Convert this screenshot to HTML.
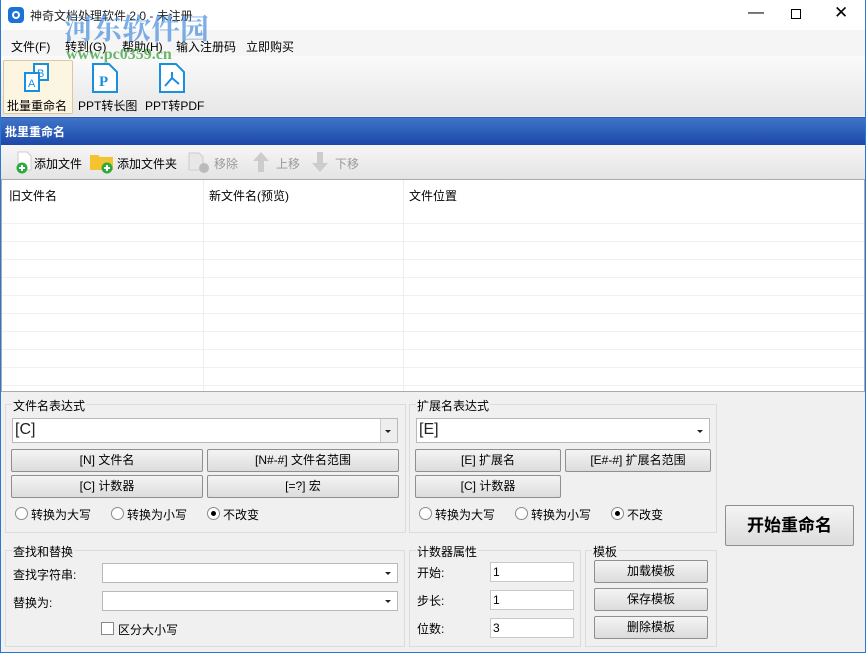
<!DOCTYPE html>
<html><head><meta charset="utf-8"><style>
*{margin:0;padding:0;box-sizing:border-box}
body{width:866px;height:653px;overflow:hidden;background:#f0f0f0;font-family:"Liberation Sans","Noto Sans CJK SC",sans-serif;font-size:12px;color:#000;position:relative}
.a{position:absolute}
.btn{position:absolute;background:linear-gradient(#f4f4f4,#dcdcdc);border:1px solid #8e8f8f;border-radius:2px;text-align:center;font-size:12px;line-height:20px}
.grp{position:absolute;border:1px solid #dcdcdc}
.lg{position:absolute;background:#f0f0f0;padding:0 1px;top:-8px;left:6px;font-size:12px}
.cb{position:absolute;background:#fff;border:1px solid #b9b9b9}
.arr{position:absolute;right:6px;top:50%;margin-top:-1px;border-left:3px solid transparent;border-right:3px solid transparent;border-top:3px solid #222}
.rad{position:absolute;width:13px;height:13px;border-radius:50%;border:1px solid #8a8a8a;background:#fff}
.rad.on::after{content:"";position:absolute;left:3px;top:3px;width:5px;height:5px;border-radius:50%;background:#000}
.lbl{position:absolute;font-size:12px}
.inp{position:absolute;background:#fff;border:1px solid #c8c8c8;padding-left:2px;font-size:12px;line-height:18px}
</style></head><body>
<div class="a" style="left:0;top:0;width:866px;height:30px;background:#fff"></div>
<div class="a" style="left:8px;top:7px;width:16px;height:16px;border-radius:4px;background:#1a73d9"></div>
<div class="a" style="left:12px;top:11px;width:8px;height:8px;border-radius:50%;border:2px solid #fff"></div>
<div class="lbl" style="left:30px;top:7px;color:#222">神奇文档处理软件 2.0 - 未注册</div>
<div class="lbl" style="left:748px;top:4px;font-size:16px">&#8212;</div>
<div class="a" style="left:791px;top:9px;width:10px;height:10px;border:1px solid #000"></div>
<div class="lbl" style="left:834px;top:3px;font-size:17px">&#10005;</div>
<div class="a" style="left:0;top:30px;width:866px;height:26px;background:#f5f5f5"></div>
<div class="lbl" style="left:11px;top:38px">文件(F)</div>
<div class="lbl" style="left:65px;top:38px">转到(G)</div>
<div class="lbl" style="left:122px;top:38px">帮助(H)</div>
<div class="lbl" style="left:176px;top:38px">输入注册码</div>
<div class="lbl" style="left:246px;top:38px">立即购买</div>
<div class="a" style="left:0;top:56px;width:866px;height:60px;background:linear-gradient(#fafafa,#e6e6e6)"></div>
<div class="a" style="left:3px;top:60px;width:70px;height:54px;background:#fcf5e2;border:1px solid #d8c9a0;border-radius:2px"></div>
<svg class="a" style="left:22px;top:62px" width="32" height="32" viewBox="0 0 32 32"><rect x="12" y="2" width="14" height="16" fill="#fff" stroke="#1a8fe0" stroke-width="2"/><text x="15" y="15" font-size="11" fill="#1a8fe0" font-family="Liberation Sans">B</text><rect x="3" y="11" width="14" height="18" fill="#fff" stroke="#1a8fe0" stroke-width="2"/><text x="6" y="25" font-size="11" fill="#1a8fe0" font-family="Liberation Sans">A</text></svg>
<div class="lbl" style="left:7px;top:97px">批量重命名</div>
<svg class="a" style="left:90px;top:62px" width="30" height="32" viewBox="0 0 30 32"><path d="M3 2h16l8 8v20H3z" fill="#fff" stroke="#1a8fe0" stroke-width="2"/><text x="9" y="24" font-size="15" font-weight="bold" fill="#1a8fe0" font-family="Liberation Serif">P</text></svg>
<div class="lbl" style="left:78px;top:97px">PPT转长图</div>
<svg class="a" style="left:157px;top:62px" width="30" height="32" viewBox="0 0 30 32"><path d="M3 2h16l8 8v20H3z" fill="#fff" stroke="#1a8fe0" stroke-width="2"/><path d="M15 10v6M8 24l7-8 7 6" fill="none" stroke="#1a8fe0" stroke-width="2"/></svg>
<div class="lbl" style="left:145px;top:97px">PPT转PDF</div>
<div class="a" style="left:64px;top:12px;z-index:5;font-size:29px;font-weight:bold;color:rgba(70,140,220,.7);font-family:'Noto Serif CJK SC',serif;line-height:32px">河东软件园</div>
<div class="a" style="left:66px;top:46px;z-index:5;font-size:16px;font-weight:bold;color:rgba(60,160,60,.75);font-family:'Liberation Serif',serif">www.pc0359.cn</div>
<div class="a" style="left:0;top:117px;width:866px;height:28px;background:linear-gradient(#3f74c9,#1c48a8);border-top:1px solid #2a5cb8"></div>
<div class="lbl" style="left:5px;top:123px;color:#fff;font-weight:bold;font-size:12px">批里重命名</div>
<div class="a" style="left:0;top:145px;width:866px;height:34px;background:linear-gradient(#f6f6f6,#e4e4e4)"></div>
<svg class="a" style="left:14px;top:150px" width="20" height="24"><path d="M4 2h9l4 4v14H4z" fill="#fff" stroke="#ccc"/><circle cx="8" cy="18" r="5.5" fill="#2eaa3c"/><path d="M8 15v6M5 18h6" stroke="#fff" stroke-width="2"/></svg>
<div class="lbl" style="left:34px;top:155px">添加文件</div>
<svg class="a" style="left:89px;top:150px" width="28" height="24"><path d="M1 5h8l2 2h13v13H1z" fill="#f4c430"/><circle cx="18" cy="18" r="5.5" fill="#2eaa3c"/><path d="M18 15v6M15 18h6" stroke="#fff" stroke-width="2"/></svg>
<div class="lbl" style="left:117px;top:155px">添加文件夹</div>
<svg class="a" style="left:187px;top:150px" width="26" height="24"><path d="M2 3h10l4 4v13H2z" fill="#e8e8e8" stroke="#ccc"/><circle cx="17" cy="18" r="5" fill="#bbb"/></svg>
<div class="lbl" style="left:214px;top:155px;color:#999">移除</div>
<svg class="a" style="left:251px;top:150px" width="20" height="24"><path d="M10 2l8 9h-5v11H7V11H2z" fill="#ccc"/></svg>
<div class="lbl" style="left:276px;top:155px;color:#999">上移</div>
<svg class="a" style="left:310px;top:150px" width="20" height="24"><path d="M10 22l8-9h-5V2H7v11H2z" fill="#ccc"/></svg>
<div class="lbl" style="left:335px;top:155px;color:#999">下移</div>
<div class="a" style="left:1px;top:179px;width:864px;height:213px;background:#fff;border:1px solid #aaa;background-image:repeating-linear-gradient(#fff 0,#fff 17px,#f0f0f0 17px,#f0f0f0 18px);background-position:0 26px"></div>
<div class="a" style="left:2px;top:180px;width:862px;height:27px;background:#fff"></div>
<div class="a" style="left:203px;top:180px;width:1px;height:211px;background:#eee"></div>
<div class="a" style="left:403px;top:180px;width:1px;height:211px;background:#eee"></div>
<div class="lbl" style="left:9px;top:187px">旧文件名</div>
<div class="lbl" style="left:209px;top:187px">新文件名(预览)</div>
<div class="lbl" style="left:409px;top:187px">文件位置</div>

<div class="grp" style="left:5px;top:404px;width:401px;height:129px"><div class="lg">文件名表达式</div></div>
<div class="cb" style="left:12px;top:418px;width:386px;height:25px"><span class="a" style="left:2px;top:2px;font-size:16px;color:#222">[C]</span><div class="a" style="right:0;top:0;width:17px;height:23px;border-left:1px solid #ccc;background:#eee"></div><div class="arr"></div></div>
<div class="btn" style="left:11px;top:449px;width:192px;height:23px">[N] 文件名</div>
<div class="btn" style="left:207px;top:449px;width:192px;height:23px">[N#-#] 文件名范围</div>
<div class="btn" style="left:11px;top:475px;width:192px;height:23px">[C] 计数器</div>
<div class="btn" style="left:207px;top:475px;width:192px;height:23px">[=?] 宏</div>
<div class="rad" style="left:15px;top:507px"></div><div class="lbl" style="left:31px;top:506px">转换为大写</div>
<div class="rad" style="left:111px;top:507px"></div><div class="lbl" style="left:127px;top:506px">转换为小写</div>
<div class="rad on" style="left:207px;top:507px"></div><div class="lbl" style="left:223px;top:506px">不改变</div>

<div class="grp" style="left:409px;top:404px;width:308px;height:129px"><div class="lg">扩展名表达式</div></div>
<div class="cb" style="left:416px;top:418px;width:294px;height:25px"><span class="a" style="left:2px;top:2px;font-size:16px;color:#222">[E]</span><div class="arr"></div></div>
<div class="btn" style="left:415px;top:449px;width:146px;height:23px">[E] 扩展名</div>
<div class="btn" style="left:565px;top:449px;width:146px;height:23px">[E#-#] 扩展名范围</div>
<div class="btn" style="left:415px;top:475px;width:146px;height:23px">[C] 计数器</div>
<div class="rad" style="left:419px;top:507px"></div><div class="lbl" style="left:435px;top:506px">转换为大写</div>
<div class="rad" style="left:515px;top:507px"></div><div class="lbl" style="left:531px;top:506px">转换为小写</div>
<div class="rad on" style="left:611px;top:507px"></div><div class="lbl" style="left:627px;top:506px">不改变</div>

<div class="btn" style="left:725px;top:505px;width:129px;height:41px;line-height:39px;font-size:17px;font-weight:bold">开始重命名</div>

<div class="grp" style="left:5px;top:550px;width:400px;height:97px"><div class="lg">查找和替换</div></div>
<div class="lbl" style="left:13px;top:566px">查找字符串:</div>
<div class="cb" style="left:102px;top:563px;width:296px;height:20px"><div class="arr"></div></div>
<div class="lbl" style="left:13px;top:594px">替换为:</div>
<div class="cb" style="left:102px;top:591px;width:296px;height:20px"><div class="arr"></div></div>
<div class="a" style="left:101px;top:622px;width:13px;height:13px;border:1px solid #888;background:#fff"></div>
<div class="lbl" style="left:118px;top:621px">区分大小写</div>

<div class="grp" style="left:409px;top:550px;width:172px;height:97px"><div class="lg">计数器属性</div></div>
<div class="lbl" style="left:417px;top:564px">开始:</div>
<div class="inp" style="left:490px;top:562px;width:84px;height:20px">1</div>
<div class="lbl" style="left:417px;top:592px">步长:</div>
<div class="inp" style="left:490px;top:590px;width:84px;height:20px">1</div>
<div class="lbl" style="left:417px;top:620px">位数:</div>
<div class="inp" style="left:490px;top:618px;width:84px;height:20px">3</div>

<div class="grp" style="left:585px;top:550px;width:132px;height:97px"><div class="lg">模板</div></div>
<div class="btn" style="left:594px;top:560px;width:114px;height:23px">加载模板</div>
<div class="btn" style="left:594px;top:588px;width:114px;height:23px">保存模板</div>
<div class="btn" style="left:594px;top:616px;width:114px;height:23px">删除模板</div>
<div class="a" style="left:0;top:0;width:866px;height:653px;border:1px solid #2b78d4;border-top:none;pointer-events:none"></div>
</body></html>
